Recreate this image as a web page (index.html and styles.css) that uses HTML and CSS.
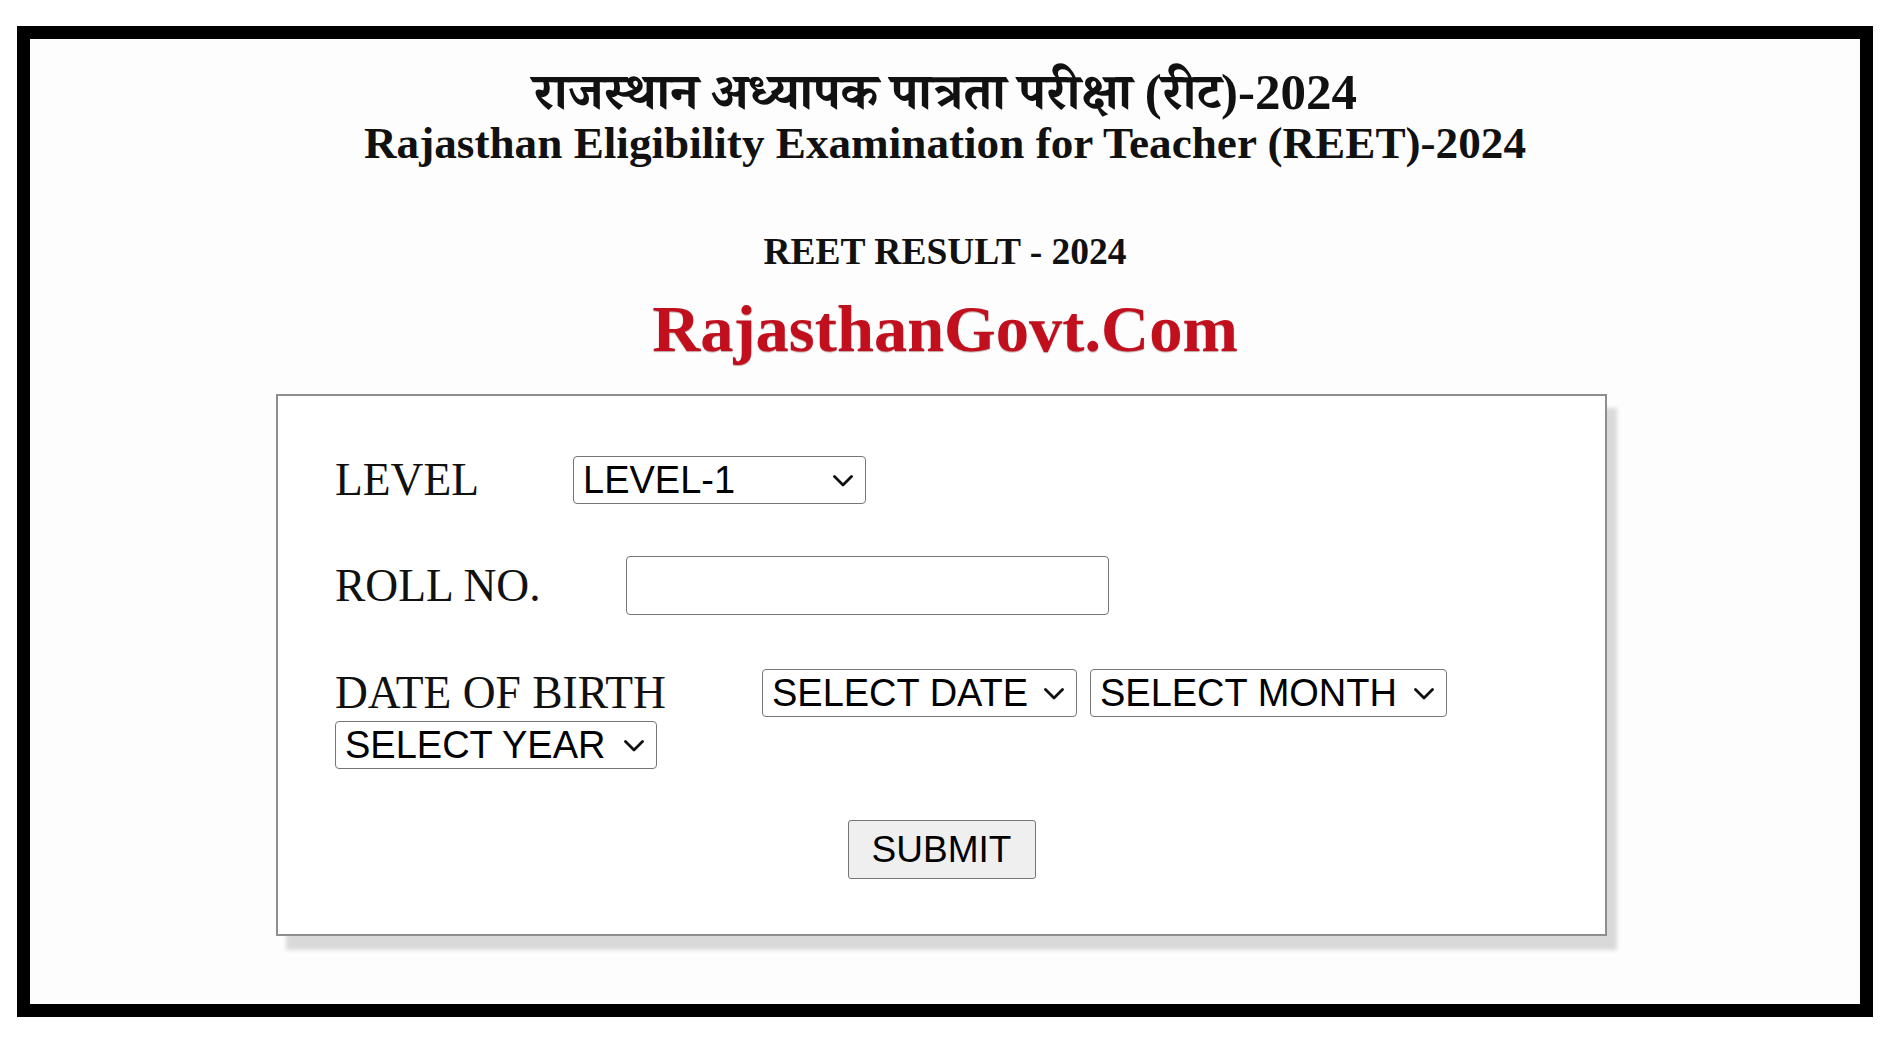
FILE: index.html
```html
<!DOCTYPE html>
<html lang="hi">
<head>
<meta charset="utf-8">
<title>REET RESULT - 2024</title>
<link rel="stylesheet" href="styles.css">
</head>
<body>
<div class="frame">
  <div class="title-hi">राजस्थान अध्यापक पात्रता परीक्षा (रीट)-2024</div>
  <div class="title-en">Rajasthan Eligibility Examination for Teacher (REET)-2024</div>
  <div class="subtitle">REET RESULT - 2024</div>
  <div class="brand">RajasthanGovt.Com</div>
  <form class="form-box" onsubmit="return false;">
    <div class="row row-level">
      <label class="label" for="level">LEVEL</label>
      <span class="sel-wrap wrap-level">
        <select id="level" class="sel">
          <option>LEVEL-1</option>
          <option>LEVEL-2</option>
        </select>
        <svg class="chev" viewBox="0 0 20 12" width="20" height="12"><path d="M1.5 1.5 L10 10 L18.5 1.5" fill="none" stroke="#111" stroke-width="2.8" stroke-linecap="round" stroke-linejoin="round"/></svg>
      </span>
    </div>
    <div class="row row-roll">
      <label class="label" for="roll">ROLL NO.</label>
      <input id="roll" class="roll-input" type="text">
    </div>
    <div class="row row-dob">
      <label class="label">DATE OF BIRTH</label>
      <span class="sel-wrap wrap-date">
        <select class="sel"><option>SELECT DATE</option></select>
        <svg class="chev" viewBox="0 0 20 12" width="20" height="12"><path d="M1.5 1.5 L10 10 L18.5 1.5" fill="none" stroke="#111" stroke-width="2.8" stroke-linecap="round" stroke-linejoin="round"/></svg>
      </span>
      <span class="sel-wrap wrap-month">
        <select class="sel"><option>SELECT MONTH</option></select>
        <svg class="chev" viewBox="0 0 20 12" width="20" height="12"><path d="M1.5 1.5 L10 10 L18.5 1.5" fill="none" stroke="#111" stroke-width="2.8" stroke-linecap="round" stroke-linejoin="round"/></svg>
      </span>
      <span class="sel-wrap wrap-year">
        <select class="sel"><option>SELECT YEAR</option></select>
        <svg class="chev" viewBox="0 0 20 12" width="20" height="12"><path d="M1.5 1.5 L10 10 L18.5 1.5" fill="none" stroke="#111" stroke-width="2.8" stroke-linecap="round" stroke-linejoin="round"/></svg>
      </span>
    </div>
    <div class="row row-submit">
      <button class="submit" type="submit">SUBMIT</button>
    </div>
  </form>
</div>
</body>
</html>
```

FILE: styles.css
```css
html, body {
  margin: 0;
  padding: 0;
  background: #ffffff;
}

body {
  width: 1899px;
  height: 1042px;
  overflow: hidden;
  font-family: "Liberation Serif", "Times New Roman", serif;
  color: #000;
}

.frame {
  box-sizing: border-box;
  margin: 26px 0 0 17px;
  width: 1856px;
  height: 991px;
  border: 13px solid #000;
  background: #fdfdfd;
  text-align: center;
  padding-top: 21px;
}

.title-hi {
  font-family: "Liberation Serif", "Noto Serif Devanagari", "Noto Sans Devanagari", "Lohit Devanagari", serif;
  font-weight: bold;
  font-size: 51px;
  line-height: 64px;
  height: 52px;
  color: #111;
}

.title-en {
  font-weight: bold;
  font-size: 45.2px;
  line-height: 62px;
  height: 62px;
  color: #111;
}

.subtitle {
  margin-top: 58px;
  font-weight: bold;
  font-size: 37.5px;
  line-height: 40px;
  color: #111;
}

.brand {
  margin-top: 20px;
  font-weight: bold;
  font-size: 66.5px;
  line-height: 74px;
  color: #c10f1e;
  text-shadow: 0 1px 1px rgba(80, 0, 0, 0.35);
}

.form-box {
  box-sizing: border-box;
  margin: 28px 0 0 246px;
  width: 1331px;
  height: 542px;
  border: 2px solid #8e8e8e;
  background: #fff;
  box-shadow: 10px 14px 4px rgba(0, 0, 0, 0.14);
  padding: 60px 57px 0 57px;
  text-align: left;
}

.row {
  display: flex;
  align-items: center;
}

.label {
  font-family: "Liberation Serif", "Times New Roman", serif;
  font-size: 45.5px;
  line-height: 48px;
  color: #111;
}

.sel-wrap {
  position: relative;
  display: inline-flex;
  height: 48px;
}

.sel {
  -webkit-appearance: none;
  appearance: none;
  box-sizing: border-box;
  width: 100%;
  height: 48px;
  font-family: "Liberation Sans", Arial, sans-serif;
  font-size: 38px;
  color: #000;
  background-color: #fff;
  border: 1px solid #767676;
  border-radius: 4px;
  padding: 0 34px 0 9px;
  margin: 0;
}

.chev {
  position: absolute;
  right: 13px;
  top: 19px;
  pointer-events: none;
}

.row-level {
  height: 48px;
}

.wrap-level {
  margin-left: 94px;
  width: 293px;
}

.row-roll {
  margin-top: 52px;
  height: 59px;
}

.roll-input {
  box-sizing: border-box;
  margin-left: 85px;
  width: 483px;
  height: 59px;
  border: 1px solid #767676;
  border-radius: 4px;
  background: #fff;
  font-family: "Liberation Sans", Arial, sans-serif;
  font-size: 30px;
  padding: 0 10px;
}

.row-dob {
  margin-top: 54px;
  flex-wrap: wrap;
  row-gap: 4px;
}

.wrap-date {
  margin-left: 96px;
  width: 315px;
}

.wrap-month {
  margin-left: 13px;
  width: 357px;
}

.wrap-year {
  width: 322px;
}

.row-submit {
  margin-top: 51px;
  justify-content: center;
}

.submit {
  box-sizing: border-box;
  width: 188px;
  height: 59px;
  font-family: "Liberation Sans", Arial, sans-serif;
  font-size: 37px;
  color: #000;
  background: #efefef;
  border: 1px solid #767676;
  border-radius: 3px;
  padding: 0;
  margin: 0;
}
```
